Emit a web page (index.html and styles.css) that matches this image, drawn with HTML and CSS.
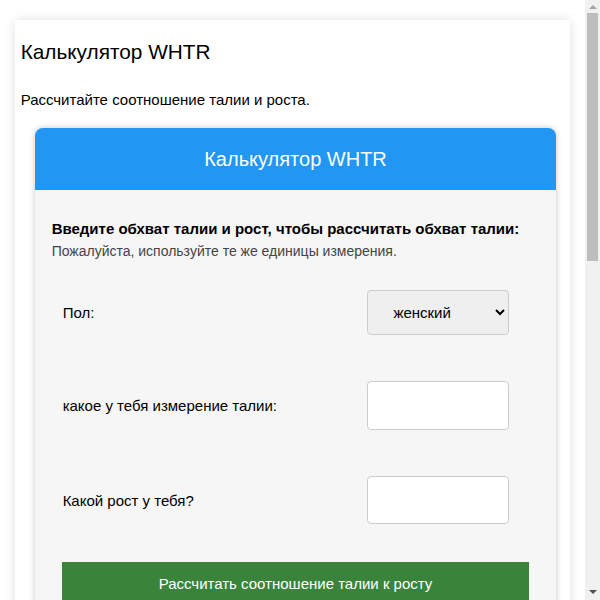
FILE: index.html
```html
<!DOCTYPE html>
<html lang="ru">
<head>
<meta charset="utf-8">
<title>Калькулятор WHTR</title>
<link rel="stylesheet" href="styles.css">
</head>
<body>
<div class="viewport">
  <div class="page">
    <h1 class="page-title">Калькулятор WHTR</h1>
    <p class="page-lead">Рассчитайте соотношение талии и роста.</p>
    <div class="calc">
      <div class="calc-header">Калькулятор WHTR</div>
      <div class="calc-body">
        <div class="calc-intro">
          <div class="calc-intro-title">Введите обхват талии и рост, чтобы рассчитать обхват талии:</div>
          <div class="calc-intro-note">Пожалуйста, используйте те же единицы измерения.</div>
        </div>
        <div class="row row-first">
          <label class="row-label" for="sex">Пол:</label>
          <select class="field field-select" id="sex">
            <option>женский</option>
            <option>мужской</option>
          </select>
        </div>
        <div class="row">
          <label class="row-label" for="waist">какое у тебя измерение талии:</label>
          <input class="field field-input field-waist" id="waist" type="text">
        </div>
        <div class="row">
          <label class="row-label" for="height">Какой рост у тебя?</label>
          <input class="field field-input field-height" id="height" type="text">
        </div>
        <button class="calc-button" type="button">Рассчитать соотношение талии к росту</button>
      </div>
    </div>
  </div>
</div>
<div class="scrollbar" aria-hidden="true">
  <div class="scroll-arrow scroll-up"></div>
  <div class="scroll-track"><div class="scroll-thumb"></div></div>
  <div class="scroll-arrow scroll-down"></div>
</div>
</body>
</html>
```

FILE: styles.css
```css
html, body {
  margin: 0;
  padding: 0;
  background: #ffffff;
}

html {
  overflow: hidden;
}

body {
  font-family: "Liberation Sans", Arial, sans-serif;
  color: #000;
}

.viewport {
  margin-right: 15px;
  padding-top: 20px;
}

.page {
  width: 95%;
  margin: 0 auto;
  padding: 20px 6px 40px;
  box-sizing: border-box;
  background: #fff;
  box-shadow: 0 0 10px rgba(0, 0, 0, 0.12);
  min-height: 800px;
}

.page-title {
  font-size: 20.8px;
  font-weight: normal;
  line-height: 23px;
  margin: 0 0 28px;
}

.page-lead {
  font-size: 15px;
  line-height: 17px;
  margin: 0 0 20px;
}

.calc {
  margin: 0 8px 0 14px;
  border-radius: 8px;
  overflow: hidden;
  background: #f6f6f6;
  box-shadow: 0 0 6px rgba(0, 0, 0, 0.22);
}

.calc-header {
  background: #2196f3;
  color: #fff;
  font-size: 20px;
  height: 62px;
  display: flex;
  align-items: center;
  justify-content: center;
}

.calc-body {
  padding: 28px 27px 30px;
}

.calc-intro {
  margin-left: -10px;
}

.calc-intro-title {
  font-size: 15px;
  font-weight: bold;
  line-height: 22px;
}

.calc-intro-note {
  font-size: 14px;
  line-height: 22px;
  color: #444;
}

.row {
  display: flex;
  align-items: center;
  justify-content: space-between;
  padding: 0 20px 0 1px;
  margin-top: 46px;
}

.row-first {
  margin-top: 28px;
}

.row-label {
  font-size: 15px;
}

.field {
  width: 142px;
  box-sizing: border-box;
  border: 1px solid #ccc;
  border-radius: 4px;
  font-family: inherit;
  font-size: 15px;
}

.field-select {
  height: 45px;
  background: #efefef;
  padding: 0 8px 0 21px;
  color: #000;
}

.field-input {
  background: #fff;
}

.field-waist {
  height: 49px;
}

.field-height {
  height: 48px;
}

.calc-button {
  display: block;
  width: 100%;
  margin-top: 38px;
  height: 42px;
  border: none;
  background: #3a833a;
  color: #fff;
  font-family: inherit;
  font-size: 15px;
}

/* fake classic scrollbar */
.scrollbar {
  position: fixed;
  top: 0;
  right: 0;
  width: 15px;
  height: 100vh;
  background: #f1f1f1;
  display: flex;
  flex-direction: column;
}

.scroll-arrow {
  height: 13px;
  display: flex;
  align-items: center;
  justify-content: center;
}

.scroll-arrow::before {
  content: "";
  width: 0;
  height: 0;
  border-left: 4px solid transparent;
  border-right: 4px solid transparent;
}

.scroll-up::before {
  border-bottom: 4px solid #a3a3a3;
}

.scroll-down {
  height: 17px;
}

.scroll-down::before {
  border-top: 4px solid #505050;
}

.scroll-track {
  flex: 1;
  padding: 0 2px;
}

.scroll-thumb {
  height: 248px;
  background: #bdbdbd;
}
```
